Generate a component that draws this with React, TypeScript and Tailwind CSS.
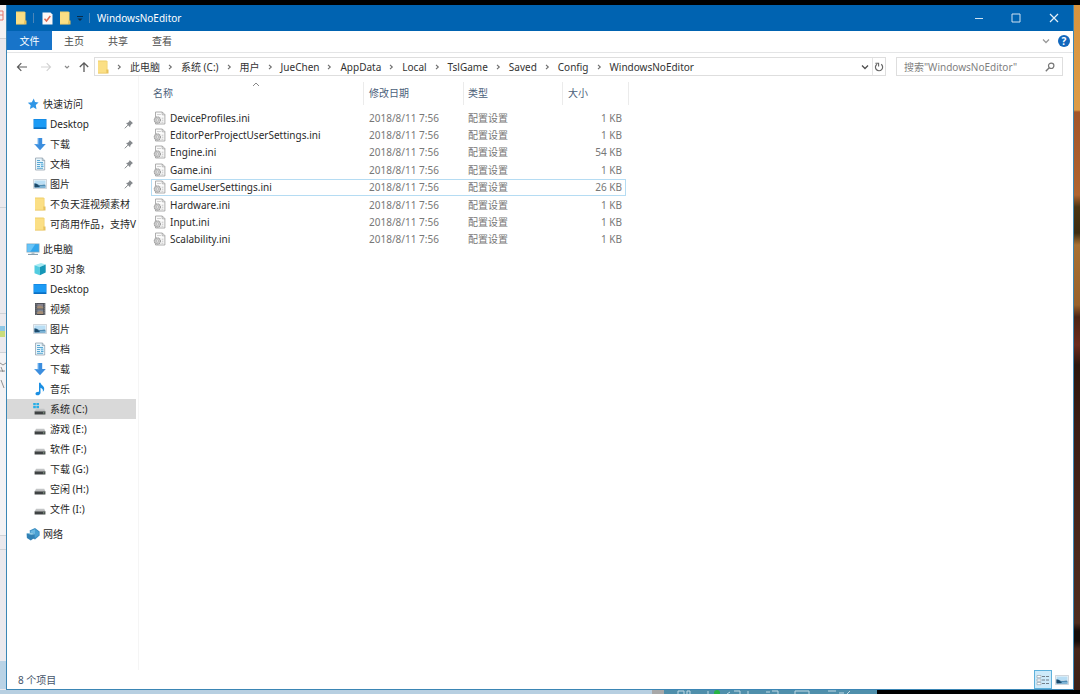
import { useState } from "react";

type IconProps = { className?: string };

const FolderIcon = ({ className = "w-3 h-[14px]" }: IconProps) => (
  <svg viewBox="0 0 12 14" className={className} aria-hidden="true">
    <path d="M1 .5h8.5l1 1V11H1z" fill="#f0cf6a" />
    <path d="M1 1.5h8.8v11.7H1z" fill="#fbdf85" />
    <path d="M9.3 9.5h2.2v4H1v-.8h8.3z" fill="#e8c25c" />
  </svg>
);

const StarIcon = () => (
  <svg viewBox="0 0 12 12" className="w-3 h-3" aria-hidden="true">
    <path
      d="M6.8.6l1.2 3.5 3.6.4-2.8 2.4.7 4.3-3.2-2-3.4 1.9.8-3.8L.8 4.8l4-.6z"
      fill="#2f96e6"
    />
  </svg>
);

const DesktopIcon = () => (
  <svg viewBox="0 0 14 12" className="w-[14px] h-3" aria-hidden="true">
    <path d="M.5 1h13v10H.5z" fill="#0f7fd8" />
    <path d="M1 1.5h12v7.7H1z" fill="#1c9bf5" />
    <path d="M1 9.8h12v.8H1z" fill="#0b66b4" />
  </svg>
);

const DownloadIcon = () => (
  <svg viewBox="0 0 14 14" className="w-[14px] h-[14px]" aria-hidden="true">
    <path d="M4.8 1h4.4v6h3.6L7 13.3 1.2 7h3.6z" fill="#3c8ede" />
    <path d="M4.8 1h1v6.6H2L1.2 7h3.6z" fill="#6db2ee" />
  </svg>
);

const DocumentIcon = () => (
  <svg viewBox="0 0 14 14" className="w-[14px] h-[14px]" aria-hidden="true">
    <path d="M2.5 1h6.8l2.4 2.3V13H2.5z" fill="#e6f4fb" stroke="#8a9aa6" strokeWidth=".7" />
    <path d="M9.3 1v2.5h2.4" fill="none" stroke="#8a9aa6" strokeWidth=".7" />
    <path d="M4 3.5h3M4 5.5h6M4 7.5h3M4 9.5h3M8 9.5h2.5M4 11.3h6" stroke="#4b9fcf" strokeWidth=".9" />
    <path d="M7.8 6.5h2.6v2H7.8z" fill="#78bfe4" />
  </svg>
);

const PictureIcon = () => (
  <svg viewBox="0 0 14 12" className="w-[14px] h-3" aria-hidden="true">
    <path d="M.5 1.5h13v9H.5z" fill="#f4f7f9" stroke="#b4bec6" strokeWidth=".6" />
    <path d="M1.5 2.5h11v3.8h-11z" fill="#b9def5" />
    <path d="M1.5 5.2c2 0 3 .9 4.5 1.5 2 .4 4-.6 6.5 0v3h-11z" fill="#4e8bb2" />
    <path d="M1.5 5.4c1.6 0 3 .9 4 2l2 1.3-6 .6z" fill="#1d4a6b" />
    <path d="M7 8.2h5.5v1.4H6z" fill="#8bc1e2" />
  </svg>
);

const ComputerIcon = () => (
  <svg viewBox="0 0 14 14" className="w-[14px] h-[14px]" aria-hidden="true">
    <path d="M.5 1.5h13v9H.5z" fill="#88aabd" />
    <path d="M1.2 2.2h11.6v7.5H1.2z" fill="#31a6ec" />
    <path d="M1.2 2.2h8l-5 7.5h-3z" fill="#69c4f7" />
    <path d="M5.5 10.5h3v1.3h-3z" fill="#a6b8c3" />
    <path d="M2 11.9h10v1H2z" fill="#7895a7" />
  </svg>
);

const CubeIcon = () => (
  <svg viewBox="0 0 14 14" className="w-[14px] h-[14px]" aria-hidden="true">
    <path d="M1.5 3.2L8 1l4.7 1.6L6.9 5z" fill="#a4eaf3" />
    <path d="M1.5 3.2L6.9 5v8.2l-5.4-2z" fill="#52cce0" />
    <path d="M6.9 5l5.8-2.4v8L6.9 13.2z" fill="#1597b7" />
  </svg>
);

const VideoIcon = () => (
  <svg viewBox="0 0 14 14" className="w-[14px] h-[14px]" aria-hidden="true">
    <path d="M2 1h10.3v12H2z" fill="#45484e" />
    <path d="M4.2 1.8h6v4.6h-6z" fill="#85838f" />
    <path d="M4.2 7.3h6v4.6h-6z" fill="#7d8595" />
    <path d="M4.2 4.5l3-1 3 1.6v1.3h-6zM4.2 10l3-1.3 3 1v2.2h-6z" fill="#a48d75" />
    <path d="M3.1 1.6v11M11.3 1.6v11" stroke="#c5c7cb" strokeWidth=".8" strokeDasharray="1 1" />
  </svg>
);

const MusicIcon = () => (
  <svg viewBox="0 0 14 14" className="w-[14px] h-[14px]" aria-hidden="true">
    <path
      d="M6 .8h1.5c.3 2.4 3.9 3 3.7 6.2-.1 1.3-.7 2.2-1.4 2.8.5-2-.2-3.3-2.3-4.1v5c0 1.5-1.4 2.6-3 2.6-1.3 0-2.2-.8-2-1.9.2-1.2 1.7-2 3.5-1.7z"
      fill="#1b8fe3"
    />
  </svg>
);

const DriveIcon = ({ system = false }: { system?: boolean }) => (
  <svg viewBox="0 0 14 14" className="w-[14px] h-[14px]" aria-hidden="true">
    {system && (
      <path d="M.2 1h2.6v2.3H.2zM3.4 1H6v2.3H3.4zM.2 3.9h2.6v2.3H.2zM3.4 3.9H6v2.3H3.4z" fill="#29aee6" />
    )}
    <path d="M3 6.8h8.3l1 2.7H1.8z" fill="#c3c5c6" />
    <path d="M1.6 9.3h10.8v3.2H1.6z" fill="#3f4243" />
    <path d="M1.9 9.3h10.2" stroke="#85898a" strokeWidth=".6" />
    <path d="M10 10.9h1.4" stroke="#a5c9a4" strokeWidth=".8" />
  </svg>
);

const NetworkIcon = () => (
  <svg viewBox="0 0 14 14" className="w-[14px] h-[14px]" aria-hidden="true">
    <path d="M3.6 3.6L9 1l4.6 3.6v4L9 12.4l-4-2z" fill="#3b8dc0" />
    <path d="M4.6 4L9 2.2v8L5 9z" fill="#6bb8e2" />
    <path d="M9 2.2l3.8 2.7v3.4L9 10.8z" fill="#4aa0d2" />
    <path d="M.6 6.6l4.8-1.2 3.4 1.8v3.4l-4 2.8L.9 11z" fill="#3181b5" />
    <path d="M.6 6.6l4.6 1.2 3.6-.6-3.4-1.8z" fill="#91cce6" />
  </svg>
);

const PinIcon = () => (
  <svg viewBox="0 0 10 10" className="w-[10px] h-[10px] shrink-0 mr-[2px]" aria-hidden="true">
    <path d="M5.6.9l3.5 3.4-1 .3-1.7 1.8-.3 1.9L2 4.1l1.9-.3 1.6-1.9z" fill="#85898d" />
    <path d="M4 6.1L.8 9.3" stroke="#85898d" strokeWidth="1" />
  </svg>
);

const IniIcon = () => (
  <svg viewBox="0 0 13 14" className="w-[13px] h-[14px] shrink-0" aria-hidden="true">
    <path d="M2.5 1h6.8l2.6 2.6V13H2.5z" fill="#fafafa" stroke="#9b9b9b" strokeWidth=".8" />
    <path d="M9.2 1v2.8h2.7" fill="none" stroke="#9b9b9b" strokeWidth=".7" />
    <path d="M4 3.5h4" stroke="#c6c6c6" strokeWidth=".8" />
    <circle cx="4.4" cy="9" r="3.1" fill="#d0d0d0" stroke="#9c9c9c" strokeWidth="1.1" strokeDasharray="1.3 .5" />
    <circle cx="4.4" cy="9" r="1.2" fill="#efefef" stroke="#a5a5a5" strokeWidth=".6" />
    <path d="M8.7 7.2h1.7M8.9 9.2h1.5M8.4 11.2h2" stroke="#b5b5b5" strokeWidth=".8" />
  </svg>
);

const Chevron = () => (
  <svg viewBox="0 0 21 8" className="w-[21px] h-2 shrink-0" aria-hidden="true">
    <path d="M9 1.8L11.3 4 9 6.2" fill="none" stroke="#6c6c6c" strokeWidth="1.1" />
  </svg>
);

const ChevronDown = ({ className = "" }: IconProps) => (
  <svg viewBox="0 0 8 6" className={"w-2 h-[6px] " + className} aria-hidden="true">
    <path d="M1 1.5l3 3 3-3" fill="none" stroke="currentColor" strokeWidth="1.3" />
  </svg>
);

type Place = { label: string; icon: React.ReactNode; pinned?: boolean };

const quickAccess: Place[] = [
  { label: "Desktop", icon: <DesktopIcon />, pinned: true },
  { label: "下载", icon: <DownloadIcon />, pinned: true },
  { label: "文档", icon: <DocumentIcon />, pinned: true },
  { label: "图片", icon: <PictureIcon />, pinned: true },
  { label: "不负天涯视频素材", icon: <FolderIcon /> },
  { label: "可商用作品，支持V", icon: <FolderIcon /> },
];

const thisPC: Place[] = [
  { label: "3D 对象", icon: <CubeIcon /> },
  { label: "Desktop", icon: <DesktopIcon /> },
  { label: "视频", icon: <VideoIcon /> },
  { label: "图片", icon: <PictureIcon /> },
  { label: "文档", icon: <DocumentIcon /> },
  { label: "下载", icon: <DownloadIcon /> },
  { label: "音乐", icon: <MusicIcon /> },
  { label: "系统 (C:)", icon: <DriveIcon system /> },
  { label: "游戏 (E:)", icon: <DriveIcon /> },
  { label: "软件 (F:)", icon: <DriveIcon /> },
  { label: "下载 (G:)", icon: <DriveIcon /> },
  { label: "空闲 (H:)", icon: <DriveIcon /> },
  { label: "文件 (I:)", icon: <DriveIcon /> },
];

const crumbs = [
  "此电脑",
  "系统 (C:)",
  "用户",
  "JueChen",
  "AppData",
  "Local",
  "TslGame",
  "Saved",
  "Config",
  "WindowsNoEditor",
];

const files = [
  { name: "DeviceProfiles.ini", size: "1 KB" },
  { name: "EditorPerProjectUserSettings.ini", size: "1 KB" },
  { name: "Engine.ini", size: "54 KB" },
  { name: "Game.ini", size: "1 KB" },
  { name: "GameUserSettings.ini", size: "26 KB" },
  { name: "Hardware.ini", size: "1 KB" },
  { name: "Input.ini", size: "1 KB" },
  { name: "Scalability.ini", size: "1 KB" },
];

const TitleBar = () => (
  <header className="h-[26px] bg-[#0063b1] flex items-center text-white">
    <div className="flex items-center pl-2 gap-[6px]">
      <FolderIcon />
      <span className="w-px h-[10px] bg-[#4c86b8]" />
      <button aria-label="属性" className="ml-[2px]">
        <svg viewBox="0 0 11 13" className="w-[11px] h-[13px] block">
          <path d="M.5.5h8l2 2v10H.5z" fill="#fbf7f6" />
          <path d="M2.5 6.8l2 2.2L8.3 4" fill="none" stroke="#dc6a55" strokeWidth="1.5" />
        </svg>
      </button>
      <button aria-label="新建文件夹">
        <FolderIcon className="w-3 h-[14px] block" />
      </button>
      <button aria-label="自定义快速访问工具栏">
        <svg viewBox="0 0 6 7" className="w-[6px] h-[7px] block">
          <path d="M0 1.5h6" stroke="#0a2c4a" />
          <path d="M.5 3.5h5L3 6z" fill="#0a2c4a" />
        </svg>
      </button>
      <span className="w-px h-[10px] bg-[#4c86b8]" />
    </div>
    <h1 className="ml-[7px]">WindowsNoEditor</h1>
    <div className="ml-auto flex h-full">
      <button aria-label="最小化" className="w-[37px] grid place-items-center">
        <svg viewBox="0 0 10 10" className="w-[10px] h-[10px]">
          <path d="M1 5.5h8" stroke="#cfe2f1" />
        </svg>
      </button>
      <button aria-label="最大化" className="w-[37px] grid place-items-center">
        <svg viewBox="0 0 10 10" className="w-[10px] h-[10px]">
          <path d="M1 1h8v8H1z" fill="none" stroke="#cfe2f1" />
        </svg>
      </button>
      <button aria-label="关闭" className="w-[39px] grid place-items-center">
        <svg viewBox="0 0 10 10" className="w-[10px] h-[10px]">
          <path d="M1 1l8 8M9 1L1 9" stroke="#e5f0f8" strokeWidth="1.2" />
        </svg>
      </button>
    </div>
  </header>
);

const Ribbon = () => (
  <div className="h-[22px] flex items-start border-b border-[#e4e5e6] text-[#4a4a4a]">
    <button className="w-[45px] h-[19px] bg-[#1874c9] text-white">文件</button>
    <button className="w-11 h-5">主页</button>
    <button className="w-11 h-5">共享</button>
    <button className="w-11 h-5">查看</button>
    <div className="ml-auto flex items-center gap-2 h-5 pr-[3px]">
      <button aria-label="展开功能区" className="text-[#9a9a9a]">
        <ChevronDown className="block" />
      </button>
      <button
        aria-label="帮助"
        className="w-3 h-3 rounded-full bg-[#1268bd] text-white leading-3 font-bold"
      >
        ?
      </button>
    </div>
  </div>
);

const AddressBar = () => {
  const [query, setQuery] = useState<string>("");

  return (
    <div className="flex items-center pt-1 pr-[10px] pl-[9px]">
      <div className="flex items-center w-[78px] shrink-0 text-[#5b5b5b]">
        <button aria-label="后退">
          <svg viewBox="0 0 12 10" className="w-3 h-[10px] block">
            <path d="M11 5H1.5M5.3 1.2L1.5 5l3.8 3.8" fill="none" stroke="currentColor" strokeWidth="1.2" />
          </svg>
        </button>
        <button aria-label="前进" className="ml-3 text-[#d3d3d3]">
          <svg viewBox="0 0 12 10" className="w-3 h-[10px] block">
            <path d="M1 5h9.5M6.7 1.2L10.5 5 6.7 8.8" fill="none" stroke="currentColor" strokeWidth="1.2" />
          </svg>
        </button>
        <button aria-label="最近浏览的位置" className="ml-3 text-[#8a8a8a]">
          <svg viewBox="0 0 6 6" className="w-[6px] h-[6px] block">
            <path d="M1 2l2 2 2-2" fill="none" stroke="currentColor" strokeWidth="1.2" />
          </svg>
        </button>
        <button aria-label="上移到" className="ml-2">
          <svg viewBox="0 0 12 12" className="w-3 h-3 block">
            <path d="M6 11V1.8M1.8 6L6 1.8 10.2 6" fill="none" stroke="currentColor" strokeWidth="1.3" />
          </svg>
        </button>
      </div>
      <div className="flex-1 min-w-0 h-[19px] border border-[#dedede] flex items-center">
        <nav aria-label="地址" className="flex items-center min-w-0 flex-1 overflow-hidden pl-[2px] text-[#333]">
          <FolderIcon className="w-3 h-[14px] shrink-0" />
          {crumbs.map((crumb) => (
            <span key={crumb} className="flex items-center shrink-0">
              <Chevron />
              <button className="whitespace-nowrap">{crumb}</button>
            </span>
          ))}
        </nav>
        <button aria-label="以前的位置" className="w-[11px] text-[#4f4f4f]">
          <ChevronDown className="block" />
        </button>
        <button
          aria-label="刷新"
          className="w-[13px] h-full border-l border-[#e4e4e4] grid place-items-center text-[#666]"
        >
          <svg viewBox="0 0 10 10" className="w-[10px] h-[10px]">
            <path d="M7.2 2.3A3.6 3.6 0 1 1 3 2.2" fill="none" stroke="currentColor" strokeWidth="1.2" />
            <path d="M1.4 1.2h3.2v3.2" fill="none" stroke="currentColor" strokeWidth="1.1" />
          </svg>
        </button>
      </div>
      <label className="ml-[10px] w-[167px] h-[19px] border border-[#dedede] flex items-center px-[7px]">
        <input
          type="text"
          aria-label="搜索"
          placeholder={'搜索"WindowsNoEditor"'}
          value={query}
          onChange={(e) => setQuery(e.target.value)}
          className="flex-1 min-w-0 outline-none placeholder:text-[#7f7f7f]"
        />
        <svg viewBox="0 0 10 10" className="w-[10px] h-[10px]" aria-hidden="true">
          <circle cx="6.2" cy="3.8" r="2.7" fill="none" stroke="#777" strokeWidth="1.2" />
          <path d="M4.2 5.8L.8 9.2" stroke="#777" strokeWidth="1.4" />
        </svg>
      </label>
    </div>
  );
};

type GroupProps = {
  label: string;
  icon: React.ReactNode;
  places?: Place[];
  selected: string;
  onSelect: (label: string) => void;
};

const PlaceGroup: React.FC<GroupProps> = ({ label, icon, places = [], selected, onSelect }) => (
  <li>
    <button className="flex items-center h-5 w-full pl-[19px]">
      <span className="w-[14px] mr-[3px] grid place-items-center">{icon}</span>
      {label}
    </button>
    <ul>
      {places.map((place) => (
        <li key={place.label}>
          <button
            onClick={() => onSelect(place.label)}
            className={`flex items-center h-5 w-full pl-[26px] ${
              selected === place.label ? "bg-[#d9d9d9]" : ""
            }`}
          >
            <span className="w-[14px] mr-[3px] grid place-items-center shrink-0">{place.icon}</span>
            <span className="flex-1 text-left whitespace-nowrap">{place.label}</span>
            {place.pinned && <PinIcon />}
          </button>
        </li>
      ))}
    </ul>
  </li>
);

const Sidebar = () => {
  const [selected, setSelected] = useState<string>("系统 (C:)");

  return (
    <aside className="w-[132px] shrink-0 border-r border-[#f5f5f5] pr-[2px] pt-[18px] text-[#262626]">
      <ul className="flex flex-col gap-[5px]">
        <PlaceGroup label="快速访问" icon={<StarIcon />} places={quickAccess} selected={selected} onSelect={setSelected} />
        <PlaceGroup label="此电脑" icon={<ComputerIcon />} places={thisPC} selected={selected} onSelect={setSelected} />
        <PlaceGroup label="网络" icon={<NetworkIcon />} selected={selected} onSelect={setSelected} />
      </ul>
    </aside>
  );
};

const FileList = () => (
  <main className="flex-1 min-w-0 pl-3 pt-[6px]">
    <table className="table-fixed w-[475px] h-[166px] border-collapse text-[#777]">
      <thead>
        <tr className="h-[27px] text-left text-[#4c607a]">
          <th className="w-[213px] p-0 font-normal align-top">
            <div className="relative h-[23px] leading-[22px] pl-[2px] border-r border-[#ebebeb]">
              名称
              <svg viewBox="0 0 8 5" className="absolute top-0 left-[101px] w-2 h-[5px]" aria-hidden="true">
                <path d="M1 4l3-3 3 3" fill="none" stroke="#888" />
              </svg>
            </div>
          </th>
          <th className="w-[100px] p-0 font-normal align-top">
            <div className="h-[23px] leading-[22px] pl-[5px] border-r border-[#ebebeb]">修改日期</div>
          </th>
          <th className="w-[99px] p-0 font-normal align-top">
            <div className="h-[23px] leading-[22px] pl-1 border-r border-[#ebebeb]">类型</div>
          </th>
          <th className="p-0 font-normal align-top">
            <div className="h-[23px] -mr-[3px] leading-[22px] pl-[5px] border-r border-[#ebebeb]">大小</div>
          </th>
        </tr>
      </thead>
      <tbody>
        {files.map((file) => (
          <tr
            key={file.name}
            className={file.name === "GameUserSettings.ini" ? "ring-1 ring-inset ring-[#b5dcf3]" : ""}
          >
            <td className="p-0 pl-[2px] text-[#2b2b2b]">
              <div className="flex items-center gap-1 h-[14px] whitespace-nowrap">
                <IniIcon />
                {file.name}
              </div>
            </td>
            <td className="p-0 pl-[5px] leading-[14px] whitespace-nowrap">2018/8/11 7:56</td>
            <td className="p-0 pl-1 leading-[14px]">配置设置</td>
            <td className="p-0 pr-1 leading-[14px] text-right">{file.size}</td>
          </tr>
        ))}
      </tbody>
    </table>
  </main>
);

const StatusBar = () => (
  <footer className="h-[19px] flex items-center justify-between pl-[11px] pr-1 text-[#44546a]">
    <span>8 个项目</span>
    <div className="flex items-center gap-[3px]">
      <button
        aria-label="详细信息"
        className="w-[18px] h-[19px] border border-[#5fb2dc] bg-[#cdeafa] grid place-items-center"
      >
        <svg viewBox="0 0 14 12" className="w-[14px] h-3">
          <path d="M1 1.5h4v2.2H1zM1 5h4v2.2H1zM1 8.5h4v2.2H1z" fill="#fff" stroke="#8d9ba5" strokeWidth=".6" />
          <path d="M6 2.5h3M10 2.5h3M6 6h3M10 6h3M6 9.5h3M10 9.5h3" stroke="#66737d" strokeWidth=".9" />
        </svg>
      </button>
      <button aria-label="大图标">
        <PictureIcon />
      </button>
    </div>
  </footer>
);

// sliver of the window that lies behind, on the left
const LeftBackdrop = () => (
  <div className="w-[6px] shrink-0 overflow-hidden bg-[#ebe9ed]" aria-hidden="true">
    <svg viewBox="0 0 6 684" className="w-[6px] h-[684px]">
      <path d="M0 0h6v33H0z" fill="#f3f1f2" />
      <path d="M0 6h3v9H0M0 10h3" fill="none" stroke="#e6776c" />
      <path d="M0 33.5h6M0 202.5h6M0 308.5h6M0 347.5h6M0 530.5h6M0 544.5h6" stroke="#cfd2d6" />
      <path d="M0 348h6v182H0z" fill="#f3f2f4" />
      <path d="M0 321h5v5H0z" fill="#8ec7e6" />
      <path d="M0 326h5v6H0z" fill="#c9dc7b" />
      <path d="M0 358l3 2 3-2M1 362l2 5M0 366h5M1 375l3 8" fill="none" stroke="#777" strokeWidth=".8" />
      <path d="M0 656h6v28H0z" fill="#b9d3e6" />
    </svg>
  </div>
);

// desktop wallpaper and taskbar peeking out around the window
const RightBackdrop = () => (
  <div
    className="w-[6px] shrink-0 bg-[linear-gradient(to_bottom,#d8943f_0px,#dc9c47_105px,#a3552a_107px,#b0642f_190px,#4a3412_202px,#3c2c10_228px,#a87032_240px,#98622c_300px,#4a2414_312px,#6b2a1c_340px,#2c170d_360px,#3b1d15_420px,#4a281c_550px,#4d2c1f_618px,#120b09_626px,#120b09_636px,#44251a_644px,#3a1f16_684px)]"
    aria-hidden="true"
  />
);

const Taskbar = () => (
  <div className="h-1 flex bg-black" aria-hidden="true">
    <div className="w-[652px] bg-[#b7cfe1]" />
    <div className="w-3 bg-[#a8a8a8]" />
    <svg viewBox="0 0 213 4" className="w-[213px] h-1 bg-[#4f8fab]">
      <path d="M14 4V1h6v3M23 4V1h3v3M44 1v3M66 2l-3 2M70 1h6v3M84 1v3M102 2h4M108 1h6v3M131 4V1h14v3M164 1h8M175 3h5M186 1l-3 3" fill="none" stroke="#c2dae5" />
      <circle cx="53" cy="3" r="3" fill="#28b445" />
    </svg>
  </div>
);

const App: React.FC = () => (
  <div className="min-h-screen flex flex-col bg-black overflow-hidden font-['Noto_Sans','Noto_Sans_CJK_SC',sans-serif] text-[10px] leading-[14px]">
    <div className="h-[5px] shrink-0" />
    <div className="flex flex-1">
      <LeftBackdrop />
      <div className="flex-1 min-w-0 flex flex-col bg-white border-x border-b border-[#3b86b5]">
        <TitleBar />
        <Ribbon />
        <AddressBar />
        <div className="flex flex-1">
          <Sidebar />
          <FileList />
        </div>
        <StatusBar />
      </div>
      <RightBackdrop />
    </div>
    <Taskbar />
  </div>
);

export default App;
